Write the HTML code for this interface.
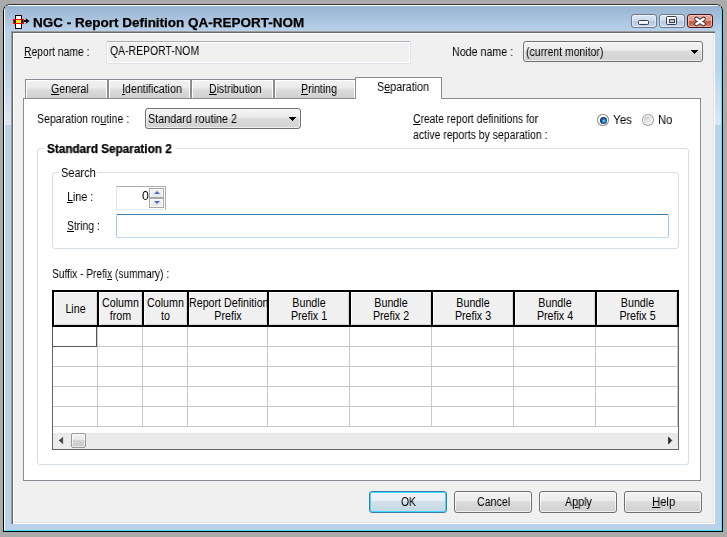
<!DOCTYPE html>
<html><head><meta charset="utf-8">
<style>
*{box-sizing:border-box;margin:0;padding:0}
html,body{width:727px;height:537px;overflow:hidden;background:#ababab}
body{position:relative;font-family:"Liberation Sans",sans-serif;font-size:12px;color:#000}
.a{position:absolute}
.t{position:absolute;white-space:nowrap;line-height:15px;transform-origin:0 0;will-change:transform}
u{text-decoration:underline;text-underline-offset:1px;text-decoration-thickness:1px}
#win{left:3px;top:4px;width:720px;height:528px;background:#b9d1ea;border:1px solid #000;border-top-color:#333;border-radius:7px 7px 0 0}
#winin{left:0;top:0;width:718px;height:526px;border-top:1px solid #fff;border-left:1px solid #fff;border-right:1px solid #3ee0ff;border-bottom:1px solid #3ee0ff;border-radius:6px 6px 0 0}
#title{left:5px;top:6px;width:716px;height:25px;background:linear-gradient(#99b4d1,#b9d1ea)}
#client{left:11px;top:31px;width:704px;height:493px;background:#f0f0f0;box-shadow:inset 1px 1px 0 #9a9a9a,inset 2px 2px 0 #6a6a6a,inset -1px -1px 0 #fff,inset -2px -2px 0 #e3e3e3,inset 3px 3px 0 #fff}
.cbtn{top:14px;height:14px;border:1px solid #6b7c91;border-radius:3px;background:linear-gradient(#dfe9f5 0%,#cad9ec 50%,#b5c9e2 51%,#c6d8ec 100%);box-shadow:inset 0 0 0 1px rgba(255,255,255,.5)}
.combo{border:1px solid #707070;border-radius:3px;background:linear-gradient(#f4f4f4 0%,#ececec 44%,#dcdcdc 46%,#d2d2d2 100%);box-shadow:inset 0 0 0 1px rgba(255,255,255,.6)}
.arrow{width:0;height:0;border-left:3.5px solid transparent;border-right:3.5px solid transparent;border-top:4px solid #000}
.tab{top:79px;height:19px;border:1px solid #898c95;border-bottom:none;background:linear-gradient(#f2f2f2 0%,#ebebeb 45%,#dddddd 50%,#cfcfcf 100%);box-shadow:inset 1px 1px 0 #fff,inset -1px 0 0 #fff}
.gb{border:1px solid #d5dfe5;border-radius:3px}
.btn{top:491px;width:78px;height:22px;border:1px solid #707070;border-radius:3px;background:linear-gradient(#f3f3f3 0%,#ebebeb 44%,#dddddd 46%,#d0d0d0 100%);box-shadow:inset 0 0 0 1px rgba(255,255,255,.7)}
.hd{position:absolute;top:290px;height:37px;background:#f0f0f0;border:2px solid #000;overflow:hidden;box-shadow:inset 1px 1px 0 #fff,inset -1px -1px 0 #d8d8d8}
</style></head><body>
<div id="win" class="a"><div id="winin" class="a"></div></div>
<div id="title" class="a"></div>
<div class="a" style="left:15px;top:15px;width:7px;height:14px;background:#fff;border:1px solid #000"></div>
<div class="a" style="left:13px;top:19px;width:11px;height:5px;border:1px solid #f00;background:#15202e"></div>
<div class="a" style="left:16px;top:20px;width:5px;height:3px;background:#f5f000"></div>
<div class="a" style="left:24px;top:20px;width:3px;height:2px;background:#000"></div>
<svg class="a" style="left:24px;top:17px" width="6" height="8" viewBox="0 0 6 8"><path d="M1.5 1 L5.5 4 L1.5 7 L2.5 4 Z" fill="#000"/></svg>

<div class="t" id="ttl" style="left:33.00px;top:15.20px;font-size:13px;font-weight:bold;-webkit-text-stroke:0.25px #000;transform:scaleX(1.0374)">NGC - Report Definition QA-REPORT-NOM</div>
<div class="a cbtn" style="left:631px;width:26px"></div>
<div class="a" style="left:638px;top:20px;width:11px;height:5px;background:linear-gradient(#fff,#e8e8e8);border:1px solid #3a404c;border-radius:1.5px"></div>
<div class="a cbtn" style="left:659px;width:26px"></div>
<div class="a" style="left:666px;top:16px;width:11px;height:9px;background:linear-gradient(#fff,#e6e6e6);border:1px solid #3a404c;border-radius:1.5px"></div>
<div class="a" style="left:669px;top:19px;width:6px;height:4px;border:1px solid #3a404c;background:#b9cde6"></div>
<div class="a cbtn" style="left:687px;width:26px;border-color:#4a1418;background:linear-gradient(#eaa898 0%,#e39a88 50%,#c9553d 55%,#d7806a 100%);box-shadow:inset 0 0 0 1px rgba(255,220,210,.6)"></div>
<svg class="a" style="left:687px;top:14px" width="26" height="14" viewBox="0 0 26 14"><path d="M9.5 5 L16.5 10 M16.5 5 L9.5 10" stroke="#3b3a48" stroke-width="4.6" stroke-linecap="round"/><path d="M9.5 5 L16.5 10 M16.5 5 L9.5 10" stroke="#fff" stroke-width="2.6" stroke-linecap="round"/></svg>
<div id="client" class="a"></div>
<div class="a" style="left:5px;top:62px;width:6px;height:63px;background:linear-gradient(rgba(255,255,255,0),rgba(255,255,255,.5))"></div>
<div class="a" style="left:715px;top:62px;width:6px;height:63px;background:linear-gradient(rgba(255,255,255,0),rgba(255,255,255,.5))"></div>

<div class="t" id="rn" style="left:24.00px;top:44.53px;font-size:12px;transform:scaleX(0.8600)"><u>R</u>eport name :</div>
<div class="a" style="left:106px;top:41px;width:305px;height:23px;background:#f0f0f0;border:1px solid #dde3ea;border-top-color:#abadb3;border-radius:2px;box-shadow:inset 0 0 0 1px #fff"></div>
<div class="t" id="rnv" style="left:110.00px;top:43.53px;font-size:12px;transform:scaleX(0.8700)">QA-REPORT-NOM</div>
<div class="t" id="nn" style="left:452.00px;top:44.53px;font-size:12px;transform:scaleX(0.8902)">Node name :</div>
<div class="a combo" style="left:523px;top:41px;width:180px;height:21px"></div>
<div class="t" id="nnv" style="left:526.00px;top:44.53px;font-size:12px;transform:scaleX(0.8715)">(current monitor)</div>
<div class="a" style="left:691px;top:50px;width:7px;height:1px;background:#000"></div><div class="a" style="left:692px;top:51px;width:5px;height:1px;background:#000"></div><div class="a" style="left:693px;top:52px;width:3px;height:1px;background:#000"></div><div class="a" style="left:694px;top:53px;width:1px;height:1px;background:#000"></div>
<div class="a" style="left:23px;top:98px;width:678px;height:383px;background:#fff;border:1px solid #898c95"></div>
<div class="a tab" style="left:25px;width:83px"></div>
<div class="a tab" style="left:108px;width:83px"></div>
<div class="a tab" style="left:191px;width:83px"></div>
<div class="a tab" style="left:274px;width:82px"></div>
<div class="a" style="left:355px;top:77px;width:87px;height:22px;background:#fff;border:1px solid #898c95;border-bottom:none"></div>
<div class="t" id="tg" style="left:51.00px;top:81.53px;font-size:12px;transform:scaleX(0.8839)"><u>G</u>eneral</div>
<div class="t" id="ti" style="left:122.00px;top:81.53px;font-size:12px;transform:scaleX(0.8897)"><u>I</u>dentification</div>
<div class="t" id="td" style="left:209.00px;top:81.53px;font-size:12px;transform:scaleX(0.8769)"><u>D</u>istribution</div>
<div class="t" id="tp" style="left:301.00px;top:81.53px;font-size:12px;transform:scaleX(0.8853)"><u>P</u>rinting</div>
<div class="t" id="ts" style="left:377.00px;top:79.53px;font-size:12px;transform:scaleX(0.8951)">S<u>e</u>paration</div>
<div class="t" id="sr" style="left:37.00px;top:111.53px;font-size:12px;transform:scaleX(0.8795)">Separation ro<u>u</u>tine :</div>
<div class="a combo" style="left:145px;top:108px;width:156px;height:21px"></div>
<div class="t" id="srv" style="left:148.00px;top:111.53px;font-size:12px;transform:scaleX(0.9011)">Standard routine 2</div>
<div class="a" style="left:289px;top:117px;width:7px;height:1px;background:#000"></div><div class="a" style="left:290px;top:118px;width:5px;height:1px;background:#000"></div><div class="a" style="left:291px;top:119px;width:3px;height:1px;background:#000"></div><div class="a" style="left:292px;top:120px;width:1px;height:1px;background:#000"></div>
<div class="t" id="cr1" style="left:413.00px;top:111.53px;font-size:12px;transform:scaleX(0.8600)"><u>C</u>reate report definitions for</div>
<div class="t" id="cr2" style="left:413.00px;top:127.53px;font-size:12px;transform:scaleX(0.8730)">active reports by separation :</div>
<div class="a" style="left:597px;top:114px;width:12px;height:12px;border-radius:50%;background:#8e8f8f;box-shadow:inset 0 0 0 1px #9a9a9a"></div>
<div class="a" style="left:598px;top:115px;width:10px;height:10px;border-radius:50%;background:#fff"></div>
<div class="a" style="left:599.5px;top:116.5px;width:7px;height:7px;border-radius:50%;background:radial-gradient(circle closest-side at 55% 55%,#9ef0ff 0%,#2f98dc 40%,#1b5c98 75%,#0f3563 100%)"></div>
<div class="a" style="left:642px;top:114px;width:12px;height:12px;border-radius:50%;background:#9c9c9c"></div>
<div class="a" style="left:643px;top:115px;width:10px;height:10px;border-radius:50%;background:#fff"></div>
<div class="a" style="left:644px;top:116px;width:8px;height:8px;border-radius:50%;background:linear-gradient(135deg,#c4c6ca 0%,#e6e7e9 60%,#f8f8f8 100%)"></div>

<div class="t" id="yes" style="left:613.00px;top:112.53px;font-size:12px;transform:scaleX(0.9642)">Yes</div>
<div class="t" id="no" style="left:658.00px;top:112.53px;font-size:12px;transform:scaleX(0.9317)">No</div>
<div class="a gb" style="left:37px;top:148px;width:652px;height:317px"></div>
<div class="a" style="left:44px;top:140px;width:132px;height:14px;background:#fff"></div>
<div class="t" id="ss2" style="left:47.00px;top:141.53px;font-size:12px;font-weight:bold;-webkit-text-stroke:0.25px #000;transform:scaleX(0.9797)">Standard Separation 2</div>
<div class="a gb" style="left:52px;top:172px;width:627px;height:77px"></div>
<div class="a" style="left:59px;top:165px;width:38px;height:14px;background:#fff"></div>
<div class="t" id="search" style="left:61.00px;top:165.53px;font-size:12px;transform:scaleX(0.9155)">Search</div>
<div class="t" id="line" style="left:67.00px;top:189.53px;font-size:12px;transform:scaleX(0.8958)"><u>L</u>ine :</div>
<div class="a" style="left:116px;top:186px;width:50px;height:24px;border:1px solid #abadb3;border-bottom-color:#e3e9ef;border-left-color:#e2e3ea;background:#fff"></div>
<div class="a" style="left:149px;top:188px;width:15px;height:20px;border:1px solid #a8a8a8;background:#fff"></div>
<div class="a" style="left:151px;top:190px;width:11px;height:7px;background:linear-gradient(#f3f3f3,#e6e6e6)"></div>
<div class="a" style="left:150px;top:197px;width:13px;height:2px;background:#a8a8a8"></div>
<div class="a" style="left:151px;top:200px;width:11px;height:6px;background:linear-gradient(#f3f3f3,#e6e6e6)"></div>
<div class="a" style="left:154px;top:191px;width:0;height:0;border-left:3px solid transparent;border-right:3px solid transparent;border-bottom:3px solid #4a68c8"></div>
<div class="a" style="left:154px;top:201px;width:0;height:0;border-left:3px solid transparent;border-right:3px solid transparent;border-top:3px solid #4a68c8"></div>
<div class="t" id="zero" style="left:142.00px;top:188.53px;font-size:12px;transform:scaleX(1.0320)">0</div>
<div class="t" id="string" style="left:67.00px;top:218.53px;font-size:12px;transform:scaleX(0.8600)"><u>S</u>tring :</div>
<div class="a" style="left:116px;top:214px;width:553px;height:24px;border:1px solid #a4c9e3;border-top-color:#3d7bad;border-bottom-color:#b7d9ed;border-radius:2px;background:#fff"></div>
<div class="t" id="suffix" style="left:52.00px;top:266.53px;font-size:12px;transform:scaleX(0.8453)">Suffix - Prefi<u>x</u> (summary) :</div>
<div class="a" style="left:52px;top:290px;width:627px;height:160px;border:1px solid #646464;background:#fff"></div>
<div class="a" style="left:97px;top:327px;width:1px;height:100px;background:#c8c8c8"></div>
<div class="a" style="left:142px;top:327px;width:1px;height:100px;background:#c8c8c8"></div>
<div class="a" style="left:187px;top:327px;width:1px;height:100px;background:#c8c8c8"></div>
<div class="a" style="left:267px;top:327px;width:1px;height:100px;background:#c8c8c8"></div>
<div class="a" style="left:349px;top:327px;width:1px;height:100px;background:#c8c8c8"></div>
<div class="a" style="left:431px;top:327px;width:1px;height:100px;background:#c8c8c8"></div>
<div class="a" style="left:513px;top:327px;width:1px;height:100px;background:#c8c8c8"></div>
<div class="a" style="left:595px;top:327px;width:1px;height:100px;background:#c8c8c8"></div>
<div class="a" style="left:677px;top:327px;width:1px;height:100px;background:#c8c8c8"></div>
<div class="a" style="left:53px;top:346px;width:625px;height:1px;background:#c8c8c8"></div>
<div class="a" style="left:53px;top:366px;width:625px;height:1px;background:#c8c8c8"></div>
<div class="a" style="left:53px;top:386px;width:625px;height:1px;background:#c8c8c8"></div>
<div class="a" style="left:53px;top:406px;width:625px;height:1px;background:#c8c8c8"></div>
<div class="a" style="left:53px;top:426px;width:625px;height:1px;background:#c8c8c8"></div>
<div class="a" style="left:52px;top:326px;width:45px;height:21px;border:1px solid #555;border-top:none"></div>
<div class="hd" style="left:52px;width:47px"></div>
<div class="hd" style="left:97px;width:47px"></div>
<div class="hd" style="left:142px;width:47px"></div>
<div class="hd" style="left:187px;width:82px"></div>
<div class="hd" style="left:267px;width:84px"></div>
<div class="hd" style="left:349px;width:84px"></div>
<div class="hd" style="left:431px;width:84px"></div>
<div class="hd" style="left:513px;width:84px"></div>
<div class="hd" style="left:595px;width:84px"></div>
<div class="a" style="left:54px;top:292px;width:43px;height:33px;overflow:hidden"><div style="position:absolute;left:0;width:48.31px;top:9.53px;text-align:center;line-height:15px;white-space:nowrap;transform:scaleX(0.89);transform-origin:0 0">Line</div></div>
<div class="a" style="left:99px;top:292px;width:43px;height:33px;overflow:hidden"><div style="position:absolute;left:0;width:48.31px;top:3.53px;text-align:center;line-height:15px;white-space:nowrap;transform:scaleX(0.89);transform-origin:0 0">Column</div><div style="position:absolute;left:0;width:48.31px;top:16.53px;text-align:center;line-height:15px;white-space:nowrap;transform:scaleX(0.89);transform-origin:0 0">from</div></div>
<div class="a" style="left:144px;top:292px;width:43px;height:33px;overflow:hidden"><div style="position:absolute;left:0;width:48.31px;top:3.53px;text-align:center;line-height:15px;white-space:nowrap;transform:scaleX(0.89);transform-origin:0 0">Column</div><div style="position:absolute;left:0;width:48.31px;top:16.53px;text-align:center;line-height:15px;white-space:nowrap;transform:scaleX(0.89);transform-origin:0 0">to</div></div>
<div class="a" style="left:189px;top:292px;width:78px;height:33px;overflow:hidden"><div style="position:absolute;left:0;width:87.64px;top:3.53px;text-align:center;line-height:15px;white-space:nowrap;transform:scaleX(0.89);transform-origin:0 0">Report Definition</div><div style="position:absolute;left:0;width:87.64px;top:16.53px;text-align:center;line-height:15px;white-space:nowrap;transform:scaleX(0.89);transform-origin:0 0">Prefix</div></div>
<div class="a" style="left:269px;top:292px;width:80px;height:33px;overflow:hidden"><div style="position:absolute;left:0;width:89.89px;top:3.53px;text-align:center;line-height:15px;white-space:nowrap;transform:scaleX(0.89);transform-origin:0 0">Bundle</div><div style="position:absolute;left:0;width:89.89px;top:16.53px;text-align:center;line-height:15px;white-space:nowrap;transform:scaleX(0.89);transform-origin:0 0">Prefix 1</div></div>
<div class="a" style="left:351px;top:292px;width:80px;height:33px;overflow:hidden"><div style="position:absolute;left:0;width:89.89px;top:3.53px;text-align:center;line-height:15px;white-space:nowrap;transform:scaleX(0.89);transform-origin:0 0">Bundle</div><div style="position:absolute;left:0;width:89.89px;top:16.53px;text-align:center;line-height:15px;white-space:nowrap;transform:scaleX(0.89);transform-origin:0 0">Prefix 2</div></div>
<div class="a" style="left:433px;top:292px;width:80px;height:33px;overflow:hidden"><div style="position:absolute;left:0;width:89.89px;top:3.53px;text-align:center;line-height:15px;white-space:nowrap;transform:scaleX(0.89);transform-origin:0 0">Bundle</div><div style="position:absolute;left:0;width:89.89px;top:16.53px;text-align:center;line-height:15px;white-space:nowrap;transform:scaleX(0.89);transform-origin:0 0">Prefix 3</div></div>
<div class="a" style="left:515px;top:292px;width:80px;height:33px;overflow:hidden"><div style="position:absolute;left:0;width:89.89px;top:3.53px;text-align:center;line-height:15px;white-space:nowrap;transform:scaleX(0.89);transform-origin:0 0">Bundle</div><div style="position:absolute;left:0;width:89.89px;top:16.53px;text-align:center;line-height:15px;white-space:nowrap;transform:scaleX(0.89);transform-origin:0 0">Prefix 4</div></div>
<div class="a" style="left:597px;top:292px;width:81px;height:33px;overflow:hidden"><div style="position:absolute;left:0;width:91.01px;top:3.53px;text-align:center;line-height:15px;white-space:nowrap;transform:scaleX(0.89);transform-origin:0 0">Bundle</div><div style="position:absolute;left:0;width:91.01px;top:16.53px;text-align:center;line-height:15px;white-space:nowrap;transform:scaleX(0.89);transform-origin:0 0">Prefix 5</div></div>
<div class="a" style="left:53px;top:433px;width:625px;height:16px;background:linear-gradient(#e3e3e3 0px,#eaeaea 2px,#ececec 100%)"></div>
<svg class="a" style="left:58px;top:436px" width="7" height="10"><defs><linearGradient id="gl" x1="0" x2="1"><stop offset="0" stop-color="#111"/><stop offset="1" stop-color="#666"/></linearGradient></defs><path d="M1 4.5 L5.2 0.5 L5.2 8.5 Z" fill="url(#gl)"/></svg>
<svg class="a" style="left:667px;top:436px" width="7" height="10"><defs><linearGradient id="gr" x1="0" x2="1"><stop offset="0" stop-color="#111"/><stop offset="1" stop-color="#666"/></linearGradient></defs><path d="M1.2 0.5 L5.5 4.5 L1.2 8.5 Z" fill="url(#gr)"/></svg>
<div class="a" style="left:71px;top:433px;width:15px;height:15px;border:1px solid #9a9a9a;border-radius:2px;background:linear-gradient(#f3f3f3 0%,#e8e8e8 45%,#d6d6d6 50%,#cacaca 100%);box-shadow:inset 0 0 0 1px rgba(255,255,255,.6)"></div>
<div class="a btn" style="left:369px;border-color:#3c7fb1;background:linear-gradient(#f0f4f8 0%,#e7eef3 44%,#d2e1ea 46%,#c2d8e3 100%);box-shadow:inset 0 0 0 1px #3fd6fb"></div>
<div class="a btn" style="left:454px"></div>
<div class="a btn" style="left:539px"></div>
<div class="a btn" style="left:624px"></div>
<div class="t" id="ok" style="left:401.00px;top:494.53px;font-size:12px;transform:scaleX(0.8600)">OK</div>
<div class="t" id="cancel" style="left:477.00px;top:494.53px;font-size:12px;transform:scaleX(0.8869)">Cancel</div>
<div class="t" id="apply" style="left:565.00px;top:494.53px;font-size:12px;transform:scaleX(0.8931)">A<u>p</u>ply</div>
<div class="t" id="help" style="left:652.00px;top:494.53px;font-size:12px;transform:scaleX(0.9419)"><u>H</u>elp</div>
</body></html>
